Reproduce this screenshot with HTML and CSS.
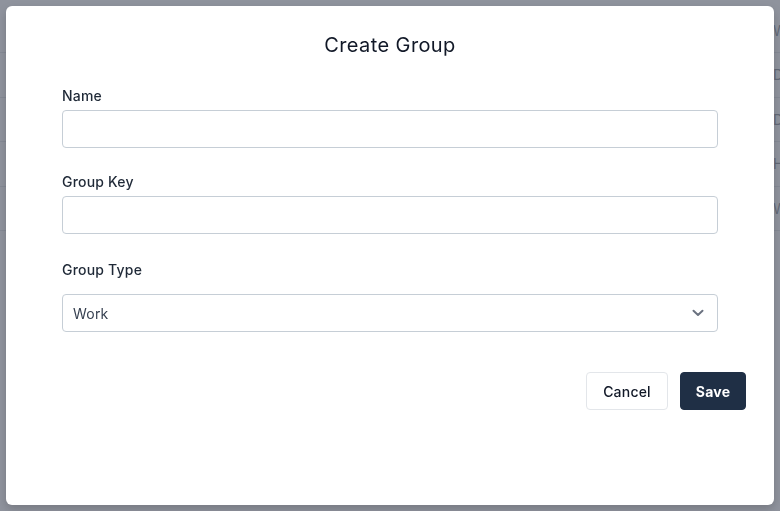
FILE: index.html
```html
<!DOCTYPE html>
<html lang="en">
<head>
<meta charset="utf-8">
<title>Groups</title>
<link rel="stylesheet" href="styles.css">
</head>
<body>
  <main class="page">
    <table class="groups-table">
      <colgroup>
        <col class="col-name-w">
        <col class="col-type-w">
      </colgroup>
      <tbody>
        <tr><td class="col-name">Personal</td><td class="col-type">Work</td></tr>
        <tr><td class="col-name">Family</td><td class="col-type">Default</td></tr>
        <tr><td class="col-name">Friends</td><td class="col-type">Default</td></tr>
        <tr><td class="col-name">Office</td><td class="col-type">Hub</td></tr>
        <tr><td class="col-name">Projects</td><td class="col-type">Work</td></tr>
      </tbody>
    </table>
  </main>

  <div class="backdrop"></div>

  <section class="modal" role="dialog" aria-labelledby="modal-title">
    <h2 class="modal-title" id="modal-title">Create Group</h2>
    <form class="modal-body">
      <div class="field field-name">
        <label class="field-label" for="group-name">Name</label>
        <input class="input" id="group-name" type="text">
      </div>
      <div class="field field-key">
        <label class="field-label" for="group-key">Group Key</label>
        <input class="input" id="group-key" type="text">
      </div>
      <div class="field field-type">
        <label class="field-label">Group Type</label>
        <div class="select">
          <span class="select-value">Work</span>
          <svg class="select-chevron" width="12" height="8" viewBox="0 0 12 8" aria-hidden="true">
            <path d="M1.5 1.8 L6 6 L10.5 1.8" fill="none" stroke="#6b7280" stroke-width="2" stroke-linecap="round" stroke-linejoin="round"/>
          </svg>
        </div>
      </div>
    </form>
    <div class="modal-footer">
      <button class="btn btn-secondary" type="button">Cancel</button>
      <button class="btn btn-primary" type="button">Save</button>
    </div>
  </section>
</body>
</html>
```

FILE: styles.css
```css
* {
  box-sizing: border-box;
}

html, body {
  margin: 0;
  height: 100%;
}

body {
  font-family: Inter, "Noto Sans", "DejaVu Sans", sans-serif;
  color: #1f2937;
  background: #ffffff;
  overflow: hidden;
}

/* underlying page */
.page {
  padding-top: 8px;
}

.groups-table {
  width: 100%;
  table-layout: fixed;
  border-collapse: collapse;
  font-size: 14px;
  color: #374151;
}

.col-type-w {
  width: 7px;
}

.groups-table td {
  height: 44.5px;
  border-bottom: 1px solid #cfd3da;
  padding: 0;
  vertical-align: middle;
  white-space: nowrap;
  overflow: visible;
}

.groups-table .col-name {
  padding-left: 24px;
}

.backdrop {
  position: fixed;
  inset: 0;
  background: rgba(112, 116, 130, 0.78);
}

/* dialog */
.modal {
  position: fixed;
  left: 6px;
  top: 6px;
  width: 768px;
  height: 499px;
  background: #ffffff;
  border-radius: 6px;
  box-shadow: 0 4px 10px rgba(0, 0, 0, 0.18);
  padding-top: 25px;
}

.modal-title {
  margin: 0 0 27px;
  font-size: 20px;
  line-height: 28px;
  font-weight: 400;
  text-align: center;
  color: #111827;
  letter-spacing: 0.4px;
}

.modal-body {
  padding: 0 56px;
}

.field {
  display: flex;
  flex-direction: column;
}

.field-name {
  margin-bottom: 24px;
}

.field-key {
  margin-bottom: 26px;
}

.field-label {
  font-size: 14px;
  line-height: 20px;
  font-weight: 500;
  color: #1f2937;
  margin-bottom: 4px;
  letter-spacing: 0.2px;
}

.field-type .field-label {
  margin-bottom: 14px;
}

.input,
.select {
  height: 38px;
  width: 100%;
  border: 1px solid #c6ced6;
  border-radius: 4px;
  background: #ffffff;
  font: inherit;
  font-size: 14px;
}

.select {
  display: flex;
  align-items: center;
  justify-content: space-between;
  padding: 0 13px 0 10px;
}

.select-value {
  color: #374151;
  letter-spacing: 0.2px;
}

.select-chevron {
  display: block;
}

.modal-footer {
  display: flex;
  justify-content: flex-end;
  gap: 12px;
  margin-top: 40px;
  padding-right: 28px;
}

.btn {
  height: 38px;
  border-radius: 4px;
  font-family: inherit;
  font-size: 14px;
  letter-spacing: 0.2px;
  cursor: pointer;
}

.btn-secondary {
  width: 82px;
  background: #ffffff;
  border: 1px solid #e3e6ea;
  color: #111827;
  font-weight: 500;
}

.btn-primary {
  width: 66px;
  background: #1f2f45;
  border: 1px solid #1f2f45;
  color: #ffffff;
  font-weight: 700;
}
```
